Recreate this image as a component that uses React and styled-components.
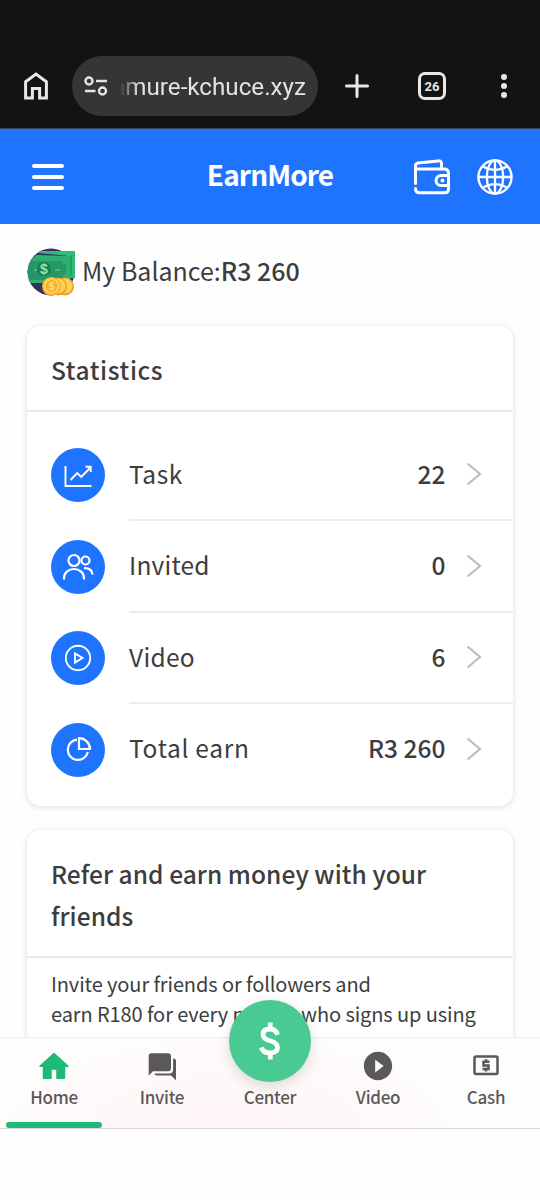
import React from "react";
import styled, { createGlobalStyle } from "styled-components";
import { MdPlayCircleFilled } from "react-icons/md";

const stats = [
  { label: "Task", value: "22", icon: <ChartIcon />, spacing: 0.6 },
  { label: "Invited", value: "0", icon: <UsersIcon />, spacing: 0.2 },
  { label: "Video", value: "6", icon: <PlayIcon />, spacing: 0.3 },
  { label: "Total earn", value: "R3 260", icon: <PieIcon />, spacing: 0.7 },
];

export default function App() {
  return (
    <Screen>
      <GlobalStyle />
      <BrowserBar>
        <HomeOutline />
        <Address>
          <SiteIcon />
          <Url>amure-kchuce.xyz</Url>
        </Address>
        <PlusIcon />
        <Tabs>26</Tabs>
        <Dots>
          <i />
          <i />
          <i />
        </Dots>
      </BrowserBar>

      <Header>
        <Burger>
          <i />
          <i />
          <i />
        </Burger>
        <Brand>EarnMore</Brand>
        <Actions>
          <WalletIcon />
          <GlobeIcon />
        </Actions>
      </Header>

      <Content>
        <Balance>
          <MoneyIcon />
          <p>
            My Balance:<b>R3 260</b>
          </p>
        </Balance>

        <Card>
          <CardTitle $spacing={0.6}>Statistics</CardTitle>
          <List>
            {stats.map(({ label, value, icon, spacing }) => (
              <Row key={label}>
                <Badge>{icon}</Badge>
                <RowBody>
                  <Label $spacing={spacing}>{label}</Label>
                  <Value>{value}</Value>
                  <Chevron />
                </RowBody>
              </Row>
            ))}
          </List>
        </Card>

        <Card>
          <CardTitle $spacing={0.06}>
            Refer and earn money with your
            <br />
            friends
          </CardTitle>
          <Text>
            Invite your friends or followers and
            <br />
            earn R180 for every person who signs up using
          </Text>
        </Card>
      </Content>

      <Nav>
        <NavItem $active>
          <HomeIcon />
          <span>Home</span>
        </NavItem>
        <NavItem>
          <ChatIcon />
          <span>Invite</span>
        </NavItem>
        <NavItem>
          <Center>
            <DollarIcon />
          </Center>
          <span>Center</span>
        </NavItem>
        <NavItem>
          <MdPlayCircleFilled />
          <span>Video</span>
        </NavItem>
        <NavItem>
          <CashIcon />
          <span>Cash</span>
        </NavItem>
      </Nav>
    </Screen>
  );
}

//icons
function HomeOutline() {
  return (
    <svg width="24" height="28" viewBox="0 0 24 28" fill="none" stroke="#e8e8e8" strokeWidth="3">
      <path d="M1.600 26V9.800L12 2l10.400 7.800V26h-6.800v-9.500H8.400V26z" />
    </svg>
  );
}

function SiteIcon() {
  return (
    <svg width="24" height="20" viewBox="0 0 24 20" fill="none" stroke="#e3e3e3" strokeWidth="2.400">
      <circle cx="5" cy="5" r="3.500" />
      <path d="M12 5h11M1 15h10.500" />
      <circle cx="18.500" cy="15" r="3.500" />
    </svg>
  );
}

function PlusIcon() {
  return (
    <svg width="24" height="24" viewBox="0 0 24 24" stroke="#e8e8e8" strokeWidth="3" strokeLinecap="round">
      <path d="M12 1.500v21M1.500 12h21" />
    </svg>
  );
}

function WalletIcon() {
  return (
    <svg width="38" height="36" viewBox="0 0 38 36" fill="none" stroke="#fff" strokeWidth="3">
      <path d="M2.500 24.500V7q0-2.600 2.600-3L25 1.900q3.500-.4 3.500 2.600v5" strokeLinecap="round" />
      <path d="M2.500 10H31q4.500 0 4.500 4.200v15.600q0 4-4 4H6.500q-4 0-4-4.300" strokeLinecap="round" />
      <path d="M35 16.500h-7a5 5 0 0 0 0 10h7" />
      <circle cx="29.500" cy="21.500" r="2" fill="#fff" stroke="none" />
    </svg>
  );
}

function GlobeIcon() {
  return (
    <svg width="36" height="36" viewBox="0 0 36 36" fill="none" stroke="#fff" strokeWidth="2.300">
      <circle cx="18" cy="18" r="16.600" />
      <ellipse cx="18" cy="18" rx="8.200" ry="16.600" />
      <path d="M18 1.400v33.200M1.400 18h33.200M5.600 7.200Q18 14.500 30.400 7.200M5.600 28.800Q18 21.500 30.400 28.800" />
    </svg>
  );
}

function MoneyIcon() {
  return (
    <svg width="49" height="49" viewBox="0 0 49 49">
      <circle cx="24" cy="24" r="23.500" fill="#32315f" />
      <path d="M11 5 14 3h34v27H43V8z" fill="#2dbb78" />
      <path d="M45 7v20l-2 1V8z" fill="#1f9d63" />
      <path d="M3.500 13q3-4 6-6l34 1v27H3.500Q-2.500 24 3.500 13z" fill="#2fae72" />
      <path d="M4 13h31q0 4 4 4v9q-4 0-4 6H3Q-2 23 4 13z" fill="#279664" />
      <circle cx="17" cy="21" r="7" fill="#1c7d53" />
      <text x="17" y="26" fontSize="14" fontWeight="700" textAnchor="middle" fill="#8be9b0" fontFamily="Liberation Sans">
        $
      </text>
      <path d="M28 22h5M7 22h3" stroke="#36c481" strokeWidth="2" />
      <circle cx="38" cy="38.500" r="9" fill="#f49b2f" />
      <circle cx="38" cy="38" r="7.500" fill="#ffd24d" />
      <circle cx="31" cy="38.500" r="9" fill="#f49b2f" />
      <circle cx="31" cy="38" r="7.500" fill="#ffd24d" />
      <circle cx="24.500" cy="38.500" r="9.500" fill="#fbae33" />
      <circle cx="24.500" cy="38" r="8" fill="#ffd24d" />
      <circle cx="24.500" cy="38" r="5.800" fill="#f9a931" />
      <text x="24.500" y="42" fontSize="11" fontWeight="700" textAnchor="middle" fill="#ffe27a" fontFamily="Liberation Sans">
        $
      </text>
    </svg>
  );
}

function ChartIcon() {
  return (
    <svg width="30" height="30" viewBox="0 0 30 30" fill="none" stroke="#fff" strokeWidth="1.900">
      <path d="M2.500 6v20h26M7.500 20l6.700-7 4 4L27.500 7.500M22.500 6.800h5.200v5.200" />
    </svg>
  );
}

function UsersIcon() {
  return (
    <svg width="32" height="32" viewBox="0 0 32 32" fill="none" stroke="#fff" strokeWidth="2.200">
      <circle cx="12" cy="9.500" r="5.500" />
      <path d="M2 28.500v-1.500a10 9 0 0 1 20 0v1.500" />
      <circle cx="23.500" cy="9.500" r="4" />
      <path d="M22 17.200q8-.5 8.500 6.500" />
    </svg>
  );
}

function PlayIcon() {
  return (
    <svg width="28" height="28" viewBox="0 0 28 28" fill="none" stroke="#fff" strokeWidth="1.900">
      <circle cx="14" cy="14" r="12.200" />
      <path d="M11 9.500v9l7.500-4.500z" />
    </svg>
  );
}

function PieIcon() {
  return (
    <svg width="28" height="28" viewBox="0 0 28 28" fill="none" stroke="#fff" strokeWidth="2.200">
      <path d="M13 3.600a10.200 10.200 0 1 0 10.900 12.500" />
      <path d="M15 2.200v10.800h11A11 11 0 0 0 15 2.200z" />
    </svg>
  );
}

function Chevron() {
  return (
    <svg width="16" height="24" viewBox="0 0 16 24" fill="none" stroke="#bdbdbd" strokeWidth="2.200">
      <path d="M1.500 1.500 14 12 1.500 22.500" />
    </svg>
  );
}

function HomeIcon() {
  return (
    <svg viewBox="0 0 34 34" fill="currentColor" stroke="currentColor" strokeWidth="1.500" strokeLinejoin="round">
      <path d="M17 4.500 31 17.200h-3.500V29.300H20v-8.300q0-1-1-1h-4q-1 0-1 1v8.300H6.500V17.200H3z" />
    </svg>
  );
}

function ChatIcon() {
  return (
    <svg viewBox="0.5 0 34 34" fill="currentColor">
      <path d="M7 4.200h16.500a3 3 0 0 1 3 3v12a3 3 0 0 1-3 3H8.500l-4.300 4.200V7a2.800 2.800 0 0 1 2.800-2.800z" />
      <path d="M28.600 9.500h.2q2.700 0 2.700 2.700v19l-5-4.700H12.500q-2.500 0-2.500-2h14.600q4 0 4-4z" />
    </svg>
  );
}

function DollarIcon() {
  return (
    <svg width="24" height="42" viewBox="0 0 24 42" fill="none" stroke="#fff" strokeWidth="4.800">
      <path d="M19.500 14.800Q18 9 12 9q-7 0-7 5.400 0 4.400 7 6.300 7.500 2 7.500 6.600 0 5.700-7.500 5.700-7 0-8.600-5.500M12.300 2.500v6M12.300 33.500v6" />
    </svg>
  );
}

function CashIcon() {
  return (
    <svg viewBox="0 0 34 34" fill="none" stroke="currentColor" strokeWidth="2.500">
      <rect x="5.500" y="7.500" width="23" height="17.500" rx="1.500" />
      <path d="M20.500 12.800h-6v3.600h5v3.600h-6M17 10.300v2.500M17 20v2.500" />
    </svg>
  );
}

//styles
const GlobalStyle = createGlobalStyle`
  * {
    box-sizing: border-box;
  }
  body {
    margin: 0;
    background: #fefefe;
    color: #3d3d3d;
    font-family: "Noto Sans CJK SC", "Noto Sans", sans-serif;
  }
  p, h1, h2 {
    margin: 0;
  }
  svg {
    flex-shrink: 0;
  }
`;
const Screen = styled.div`
  width: 540px;
  height: 1200px;
  padding-bottom: 71px;
  display: flex;
  flex-direction: column;
  overflow: hidden;
`;
const BrowserBar = styled.div`
  height: 129px;
  flex-shrink: 0;
  display: flex;
  align-items: center;
  padding: 44px 30px 0 24px;
  border-bottom: 1px solid #34425c;
  background: #131313;
`;
const Address = styled.div`
  width: 246px;
  height: 60px;
  flex-shrink: 0;
  margin: 0 27px 0 24px;
  padding: 0 12px;
  display: flex;
  align-items: center;
  justify-content: space-between;
  border-radius: 30px;
  background: #343537;
`;
const Url = styled.div`
  padding-top: 2px;
  white-space: nowrap;
  color: #e3e3e3;
  font: 400 24.200px/36px Roboto, sans-serif;
  mask-image: linear-gradient(90deg, transparent 8px, #000 26px);
`;
const Tabs = styled.div`
  width: 28px;
  height: 28px;
  flex-shrink: 0;
  margin: 0 55px 0 49px;
  display: flex;
  align-items: center;
  justify-content: center;
  border: 3px solid #e8e8e8;
  border-radius: 7px;
  color: #e8e8e8;
  font: 700 13px Roboto, sans-serif;
`;
const Dots = styled.div`
  display: grid;
  gap: 3px;
  i {
    width: 6px;
    height: 6px;
    border-radius: 50%;
    background: #e8e8e8;
  }
`;
const Header = styled.header`
  height: 95px;
  flex-shrink: 0;
  display: grid;
  grid-template-columns: 1fr auto 1fr;
  align-items: center;
  padding: 0 27px 0 32px;
  background: #1f74ff;
  color: #fff;
`;
const Burger = styled.div`
  width: 32px;
  display: grid;
  gap: 7px;
  i {
    height: 4px;
    border-radius: 3px;
    background: #fff;
  }
`;
const Brand = styled.h1`
  margin-right: 5px;
  padding-bottom: 6px;
  font-size: 28px;
  font-weight: 700;
  line-height: 40px;
  letter-spacing: -0.900px;
`;
const Actions = styled.div`
  display: flex;
  justify-content: flex-end;
  gap: 26px;
`;
const Content = styled.main`
  flex: 1;
  min-height: 0;
  overflow: hidden;
  padding: 24px 27px 0;
  display: flex;
  flex-direction: column;
  gap: 24px;
`;
const Balance = styled.div`
  height: 54px;
  flex-shrink: 0;
  display: flex;
  gap: 6px;
  font-size: 25px;
  line-height: 44px;
  b {
    font-weight: 500;
  }
`;
const Card = styled.section`
  flex-shrink: 0;
  border-radius: 14px;
  background: #fff;
  box-shadow: 0 1px 6px rgba(0, 0, 0, 0.14);
`;
const CardTitle = styled.h2`
  padding: 23px 24px 19px;
  border-bottom: 2px solid #e9e9e9;
  font-size: 24.500px;
  font-weight: 500;
  line-height: 42px;
  letter-spacing: ${({ $spacing }) => $spacing}px;
`;
const List = styled.div`
  padding: 17.500px 0 10.500px;
`;
const Row = styled.div`
  display: flex;
  align-items: center;
  gap: 24px;
  padding-left: 24px;
`;
const Badge = styled.div`
  width: 54px;
  height: 54px;
  display: flex;
  align-items: center;
  justify-content: center;
  border-radius: 50%;
  background: #1f74ff;
`;
const RowBody = styled.div`
  flex: 1;
  height: 91.500px;
  display: flex;
  align-items: center;
  padding-right: 31px;
  border-bottom: 2px solid #ececec;
  ${Row}:last-child & {
    border-color: transparent;
  }
`;
const Label = styled.span`
  flex: 1;
  padding-bottom: 2px;
  font-size: 24.500px;
  letter-spacing: ${({ $spacing }) => $spacing}px;
`;
const Value = styled.span`
  margin-right: 20.500px;
  padding-bottom: 2px;
  font-size: 24.500px;
  font-weight: 500;
`;
const Text = styled.p`
  padding: 11px 24px 60px;
  font-size: 20px;
  line-height: 30px;
  letter-spacing: -0.100px;
  white-space: nowrap;
`;
const Nav = styled.nav`
  height: 92px;
  flex-shrink: 0;
  position: relative;
  display: grid;
  grid-template-columns: repeat(5, 1fr);
  border-top: 1px solid #eee;
  border-bottom: 1px solid #ded8dc;
  background: radial-gradient(ellipse 50% 120% at 42% 100%, #fef5f5, #fefdfd);
`;
const NavItem = styled.div`
  position: relative;
  display: flex;
  flex-direction: column;
  align-items: center;
  padding-top: 11px;
  color: #5a5859;
  font-size: 17px;
  font-weight: 500;
  line-height: 26px;
  letter-spacing: -0.300px;
  > svg {
    width: 34px;
    height: 34px;
    color: ${({ $active }) => ($active ? "#1dbb77" : "#5a5859")};
  }
  > span {
    margin-top: auto;
    margin-bottom: 18px;
  }
  &::after {
    content: "";
    display: ${({ $active }) => ($active ? "block" : "none")};
    position: absolute;
    left: 6px;
    right: 6px;
    bottom: 0;
    height: 6px;
    border-radius: 3px;
    background: #1dbb77;
  }
`;
const Center = styled.div`
  position: absolute;
  top: -38px;
  width: 82px;
  height: 82px;
  display: flex;
  align-items: center;
  justify-content: center;
  border-radius: 50%;
  background: #48ca92;
  box-shadow: 0 4px 14px rgba(0, 0, 0, 0.14);
`;
